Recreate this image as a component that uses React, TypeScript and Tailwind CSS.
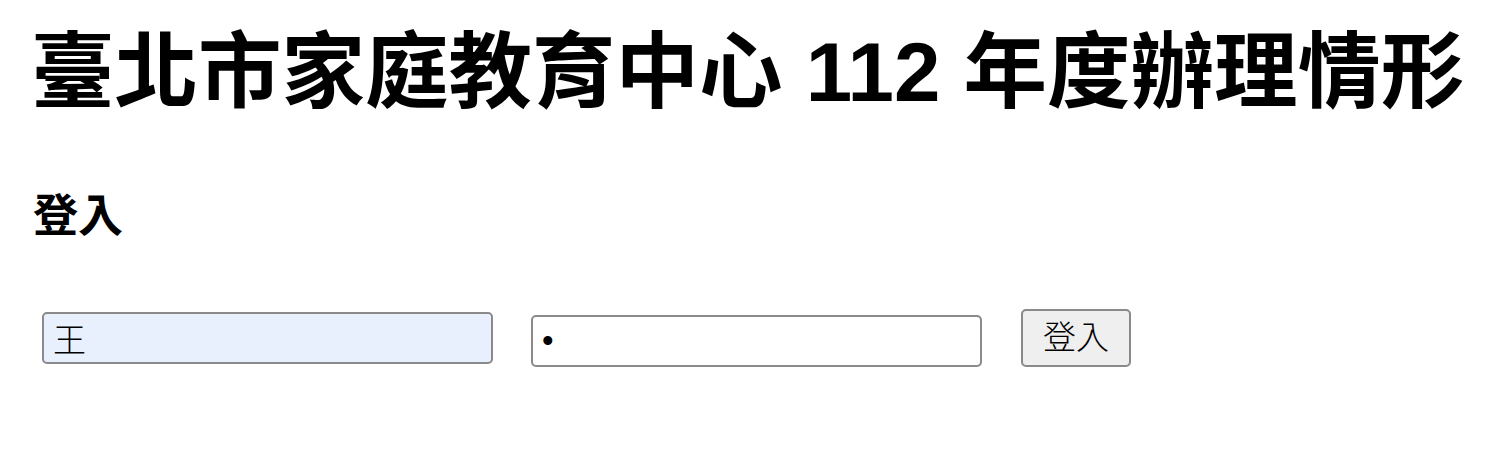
import React from "react";

const cjk = "font-['Liberation_Sans','Noto_Sans_CJK_TC',sans-serif]";

export default function App() {
  return (
    <div className={`min-h-[463px] w-[1492px] bg-white pl-[33px] text-black ${cjk}`}>
      {/* page title */}
      <h1 className="-ml-[2px] pt-[31px] text-[83.5px] font-bold leading-none whitespace-nowrap">
        臺北市家庭教育中心 112 年度辦理情形
      </h1>

      <h3 className="mt-[79px] text-[45px] font-semibold leading-none">登入</h3>

      {/* login form */}
      <form className="mt-[70px] flex items-start pl-[9px]" onSubmit={e => e.preventDefault()}>
        <input
          type="text"
          defaultValue="王"
          className="mt-[3px] h-[52px] w-[451px] rounded-[5px] border-2 border-[#8a8a8a] bg-[#e8f0fe] px-[9px] text-[33px] font-light leading-none outline-none"
        />
        <input
          type="password"
          defaultValue="a"
          className="ml-[38px] mt-[6px] h-[52px] w-[451px] rounded-[5px] border-2 border-[#8a8a8a] bg-white px-[9px] text-[33px] leading-none outline-none"
        />
        <button
          type="submit"
          className="ml-[39px] h-[58px] w-[110px] rounded-[5px] border-2 border-[#8a8a8a] bg-[#efefef] text-[33px] font-light leading-none"
        >
          登入
        </button>
      </form>
    </div>
  );
}
